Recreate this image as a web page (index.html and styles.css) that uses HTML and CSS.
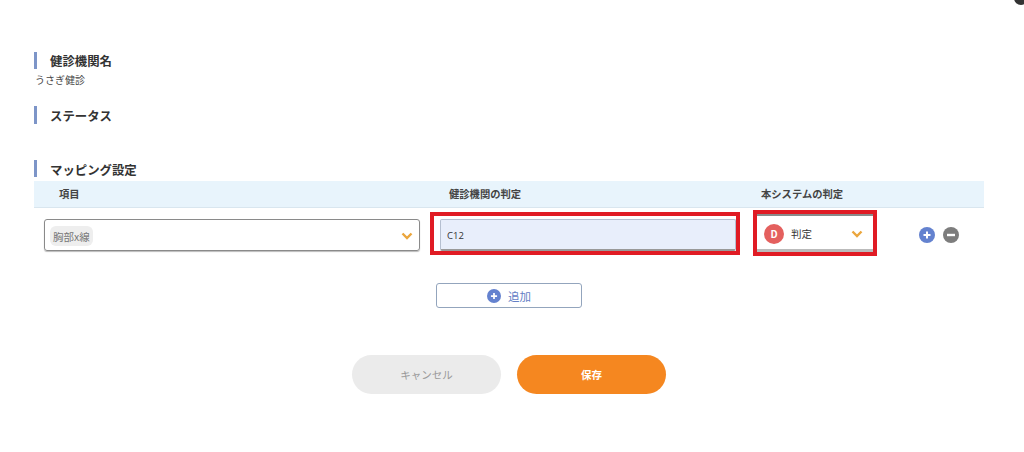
FILE: index.html
```html
<!DOCTYPE html>
<html lang="ja">
<head>
  <meta charset="UTF-8" />
  <title>マッピング設定</title>
  <link rel="stylesheet" href="styles.css">
</head>
<body>
  <div class="corner-badge"></div>

  <h3 class="section-title first">健診機関名</h3>
  <div class="section-value">うさぎ健診</div>

  <h3 class="section-title status">ステータス</h3>

  <h3 class="section-title mapping">マッピング設定</h3>

  <div class="table-head">
    <div class="col-item">項目</div>
    <div class="col-org">健診機関の判定</div>
    <div class="col-sys">本システムの判定</div>
  </div>

  <div class="table-row">
    <div class="select-item">
      <span class="tag">胸部x線</span>
      <svg class="chevron" viewBox="0 0 12 8"><path d="M1.5 1.5 6 6l4.5-4.5" /></svg>
    </div>
    <div class="red-box org-box">
      <div class="org-input">C12</div>
    </div>
    <div class="red-box sys-box">
      <div class="sys-select">
        <span class="grade">D</span>
        <span class="grade-label">判定</span>
        <svg class="chevron" viewBox="0 0 12 8"><path d="M1.5 1.5 6 6l4.5-4.5" /></svg>
      </div>
    </div>
    <div class="row-actions">
      <svg class="round-icon" viewBox="0 0 16 16">
        <circle cx="8" cy="8" r="8" fill="#6482cf" />
        <path d="M8 4.5v7M4.5 8h7" stroke="#fff" stroke-width="2" />
      </svg>
      <svg class="round-icon" viewBox="0 0 16 16">
        <circle cx="8" cy="8" r="8" fill="#7d7d7d" />
        <path d="M4 8h8" stroke="#fff" stroke-width="2.4" />
      </svg>
    </div>
  </div>

  <div class="add-wrap">
    <button class="add-btn">
      <svg class="round-icon" viewBox="0 0 16 16">
        <circle cx="8" cy="8" r="8" fill="#6482cf" />
        <path d="M8 4.5v7M4.5 8h7" stroke="#fff" stroke-width="2" />
      </svg>
      追加
    </button>
  </div>

  <div class="footer-btns">
    <button class="btn btn-cancel">キャンセル</button>
    <button class="btn btn-save">保存</button>
  </div>
</body>
</html>
```

FILE: styles.css
```css
body {
  margin: 0;
  padding: 52px 40px 0 34px;
  height: 452px;
  box-sizing: border-box;
  overflow: hidden;
  position: relative;
  background: #fff;
  color: #333;
  font-family: "Noto Sans CJK JP", "Noto Sans", sans-serif;
}
.corner-badge {
  position: absolute;
  top: -9px;
  right: -4px;
  width: 14px;
  height: 14px;
  border-radius: 50%;
  background: #333;
}
.section-title {
  margin: 0;
  height: 17px;
  line-height: 18px;
  padding-left: 13px;
  border-left: 3px solid #7d95c8;
  font-size: 12.4px;
  font-weight: 700;
  color: #333;
}
.section-value {
  margin-top: 3px;
  padding-left: 1px;
  height: 15px;
  line-height: 15px;
  font-size: 10px;
  color: #444;
}
.section-title.status {
  margin-top: 19px;
  height: 18px;
  line-height: 20px;
}
.section-title.mapping {
  margin-top: 36px;
  line-height: 20px;
}
.table-head {
  display: flex;
  margin-top: 4px;
  height: 27px;
  line-height: 25px;
  background: #e8f4fc;
  border-bottom: 1px solid #d9e6ef;
  box-sizing: border-box;
  font-size: 10.3px;
  font-weight: 700;
  color: #444;
}
.col-item {
  width: 415px;
  padding-left: 25px;
  box-sizing: border-box;
}
.col-org {
  width: 312px;
}
.table-row {
  display: flex;
  align-items: center;
  margin-top: 2px;
  padding-left: 10px;
}
.select-item {
  width: 376px;
  height: 32px;
  margin-top: 4px;
  box-sizing: border-box;
  display: flex;
  align-items: center;
  justify-content: space-between;
  padding: 2px 6px 0 5px;
  border: 1px solid #8a8a8a;
  border-radius: 3px;
  box-shadow: 0 1px 1px #bbb;
}
.tag {
  height: 20px;
  line-height: 22px;
  padding: 0 3px;
  background: #eee;
  border-radius: 6px;
  font-size: 10.5px;
  color: #777;
}
.chevron {
  width: 12px;
  height: 8px;
  fill: none;
  stroke: #eba63d;
  stroke-width: 2.4;
}
.red-box {
  border: 4px solid #e01b24;
  box-sizing: border-box;
}
.org-box {
  margin-left: 10px;
  width: 310px;
  height: 43px;
  padding: 3px 0 0 6px;
}
.org-input {
  width: 296px;
  height: 32px;
  line-height: 31px;
  box-sizing: border-box;
  padding-left: 6px;
  background: #e8eefb;
  border: 1px solid #b5bfd0;
  border-bottom: 2px solid #999;
  border-radius: 2px;
  font-family: "Open Sans", sans-serif;
  font-size: 9.5px;
  color: #333;
}
.sys-box {
  margin-left: 13px;
  width: 124px;
  height: 46px;
}
.sys-select {
  height: 38px;
  box-sizing: border-box;
  display: flex;
  align-items: center;
  padding: 2px 10px 0 7px;
  border-top: 2px solid #8a8a8a;
  border-bottom: 3px solid #bbb;
}
.grade {
  width: 20px;
  height: 20px;
  line-height: 20px;
  border-radius: 50%;
  background: #e4605e;
  color: #fff;
  text-align: center;
  font-size: 10px;
  font-weight: 700;
}
.grade-label {
  margin-left: 7px;
  flex: 1;
  font-size: 10.5px;
  color: #333;
}
.row-actions {
  display: flex;
  gap: 8px;
  margin-left: 42px;
  margin-top: 4px;
}
.round-icon {
  display: block;
  width: 16px;
  height: 16px;
}
.add-wrap {
  display: flex;
  justify-content: center;
  margin-top: 27px;
}
.add-btn {
  width: 146px;
  height: 25px;
  display: flex;
  align-items: center;
  justify-content: center;
  gap: 7px;
  padding: 0;
  background: #fff;
  border: 1px solid #93a5bd;
  border-radius: 3px;
  font-family: inherit;
  font-size: 11.5px;
  color: #6480c5;
}
.add-btn .round-icon {
  width: 14px;
  height: 14px;
}
.footer-btns {
  display: flex;
  justify-content: center;
  gap: 16px;
  margin-top: 47px;
}
.btn {
  width: 149px;
  height: 39px;
  border: none;
  border-radius: 20px;
  font-family: inherit;
  font-size: 10.5px;
}
.btn-cancel {
  background: #ebebeb;
  color: #999;
}
.btn-save {
  background: #f58720;
  color: #fff;
  font-weight: 700;
}
```
